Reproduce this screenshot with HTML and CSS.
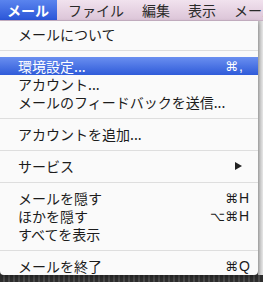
FILE: index.html
```html
<!DOCTYPE html>
<html lang="ja">
<head>
  <meta charset="UTF-8">
  <title>メール</title>
  <link rel="stylesheet" href="styles.css">
</head>
<body>
  <div class="screen">
    <div class="menubar">
      <span class="title active">メール</span>
      <span class="title">ファイル</span>
      <span class="title">編集</span>
      <span class="title">表示</span>
      <span class="title">メールボックス</span>
    </div>

    <div class="middle">
      <div class="dropdown">
        <div class="item"><span class="label">メールについて</span></div>
        <div class="sep"></div>
        <div class="item selected">
          <span class="label">環境設定...</span>
          <span class="mods">⌘</span><span class="key">,</span>
        </div>
        <div class="item"><span class="label">アカウント...</span></div>
        <div class="item"><span class="label">メールのフィードバックを送信...</span></div>
        <div class="sep"></div>
        <div class="item"><span class="label">アカウントを追加...</span></div>
        <div class="sep"></div>
        <div class="item">
          <span class="label">サービス</span>
          <svg class="arrow" width="7" height="8" viewBox="0 0 7 8"><polygon points="0,0 7,4 0,8" fill="#222"/></svg>
        </div>
        <div class="sep"></div>
        <div class="item">
          <span class="label">メールを隠す</span>
          <span class="mods">⌘</span><span class="key">H</span>
        </div>
        <div class="item">
          <span class="label">ほかを隠す</span>
          <span class="mods">⌥⌘</span><span class="key">H</span>
        </div>
        <div class="item"><span class="label">すべてを表示</span></div>
        <div class="sep"></div>
        <div class="item">
          <span class="label">メールを終了</span>
          <span class="mods">⌘</span><span class="key">Q</span>
        </div>
      </div>
      <div class="edge"></div>
    </div>

    <div class="desk"></div>
  </div>
</body>
</html>
```

FILE: styles.css
```css
body {
  margin: 0;
  font-family: "Noto Sans CJK JP", "Noto Sans", sans-serif;
  color: #1c1c1c;
}

.screen {
  width: 263px;
  height: 282px;
  overflow: hidden;
  display: flex;
  flex-direction: column;
  background: #3a3a3a;
}

.menubar {
  height: 21px;
  display: flex;
  align-items: center;
  white-space: nowrap;
  overflow: hidden;
  background: linear-gradient(#f1e2ee, #dcc5d8);
  border-bottom: 1px solid #c9b3c6;
  box-sizing: border-box;
  font-size: 14px;
  line-height: 1;
  color: #2a2a2a;
}

.title {
  height: 100%;
  display: flex;
  align-items: center;
  padding: 0 9px;
}

.title.active {
  padding: 0 8px 0 7px;
  margin-right: 2px;
  font-weight: bold;
  color: #fff;
  background: linear-gradient(#5a84ee, #2b56d8);
}

.middle {
  display: flex;
  height: 254px;
}

.dropdown {
  width: 258px;
  padding-top: 4px;
  background: #fafafa;
  border-radius: 0 0 4px 4px;
  box-shadow: 0 2px 4px rgba(0, 0, 0, 0.35);
  font-size: 14px;
  position: relative;
  z-index: 1;
}

.edge {
  flex: 1;
  background: linear-gradient(to right, #bdbdbd, #e6e6e6);
}

.item {
  height: 18px;
  display: flex;
  align-items: center;
  padding: 0 7px 0 18px;
  line-height: 1;
}

.item .label {
  flex: 1;
}

.item.selected {
  color: #fff;
  background: linear-gradient(#6a8ff0, #2f5bd9);
}

.mods {
  font-family: "DejaVu Sans", sans-serif;
  font-size: 13px;
}

.key {
  width: 12px;
  margin-left: 1px;
  font-family: "Liberation Sans", sans-serif;
  font-size: 14px;
}

.arrow {
  margin-right: 9px;
}

.sep {
  height: 14px;
  display: flex;
  align-items: center;
}

.sep::after {
  content: "";
  flex: 1;
  height: 1px;
  background: #dedede;
}

.desk {
  flex: 1;
  background: repeating-linear-gradient(90deg, #2e2e2e 0 3px, #4a4a4a 3px 5px);
}
```
